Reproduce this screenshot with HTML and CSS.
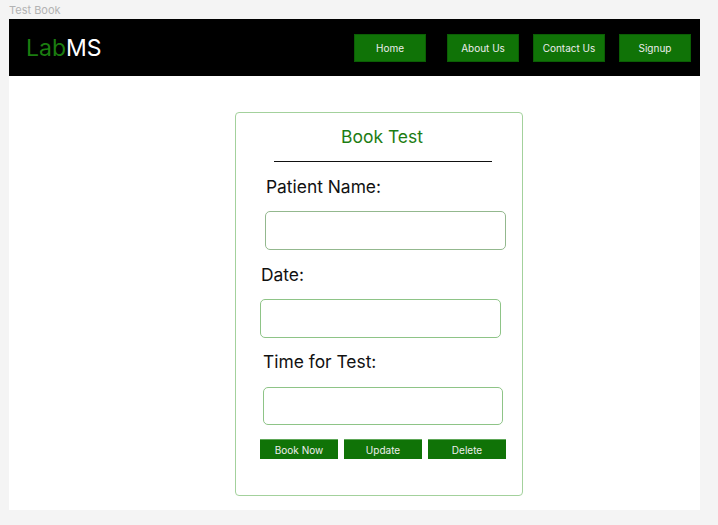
FILE: index.html
```html
<!DOCTYPE html>
<html lang="en">
<head>
<meta charset="utf-8">
<title>Test Book</title>
<link rel="stylesheet" href="styles.css">
</head>
<body>
  <div class="frame-label">Test Book</div>
  <div class="frame">
    <header class="topbar">
      <div class="logo"><span class="logo-lab">Lab</span><span class="logo-ms">MS</span></div>
      <nav class="nav">
        <a class="nav-btn">Home</a>
        <a class="nav-btn nav-btn-wide">About Us</a>
        <a class="nav-btn">Contact Us</a>
        <a class="nav-btn">Signup</a>
      </nav>
    </header>
    <main class="card">
      <h1 class="card-title">Book Test</h1>
      <div class="divider"></div>
      <label class="field-label label-name">Patient Name:</label>
      <input class="field field-name" type="text">
      <label class="field-label label-date">Date:</label>
      <input class="field field-date" type="text">
      <label class="field-label label-time">Time for Test:</label>
      <input class="field field-time" type="text">
      <div class="actions">
        <button class="action-btn">Book Now</button>
        <button class="action-btn">Update</button>
        <button class="action-btn">Delete</button>
      </div>
    </main>
  </div>
</body>
</html>
```

FILE: styles.css
```css
* { box-sizing: border-box; }

body {
  margin: 0;
  background: #f4f4f4;
  font-family: Inter, "Noto Sans", sans-serif;
  width: 718px;
  height: 525px;
  overflow: hidden;
}

.frame-label {
  margin: 4px 0 0 9px;
  font-size: 11px;
  line-height: 13px;
  color: #b3b3b3;
}

.frame {
  margin: 2px 0 0 9px;
  width: 691px;
  height: 491px;
  background: #ffffff;
  overflow: hidden;
}

.topbar {
  height: 57px;
  background: #000000;
  display: flex;
  align-items: center;
  padding: 0 9px 0 17px;
}

.logo {
  font-size: 23px;
  line-height: 28px;
  letter-spacing: 0;
}

.logo-lab { color: #1b7d10; }
.logo-ms { color: #ffffff; }

.nav {
  margin-left: auto;
  display: flex;
  gap: 14px;
}

.nav-btn {
  width: 72px;
  height: 28px;
  background: #107307;
  border: 1px solid #0b5e04;
  color: #ececec;
  font-size: 10px;
  display: flex;
  align-items: center;
  justify-content: center;
}

.nav-btn-wide { margin-left: 7px; }

.card {
  margin: 36px 0 0 226px;
  width: 288px;
  height: 384px;
  border: 1px solid #a3d19c;
  border-radius: 4px;
  padding-top: 14px;
}

.card-title {
  margin: 0;
  padding-left: 6px;
  font-weight: 400;
  font-size: 17.5px;
  line-height: 20px;
  color: #1d7d13;
  text-align: center;
}

.divider {
  margin: 14px 0 0 38px;
  width: 218px;
  height: 1px;
  background: #111111;
}

.field-label {
  display: block;
  font-size: 17.4px;
  line-height: 20px;
  color: #111111;
}

.label-name { margin: 15px 0 0 30px; }
.label-date { margin: 15px 0 0 25px; }
.label-time { margin: 14px 0 0 27px; }

.field {
  display: block;
  width: 241px;
  height: 39px;
  border: 1px solid #8ec487;
  border-radius: 5px;
  background: #ffffff;
  padding: 0;
  outline: none;
}

.field-name { margin: 14px 0 0 29px; border-color: #93b88e; }
.field-date { margin: 14px 0 0 24px; }
.field-time { margin: 15px 0 0 27px; width: 240px; height: 38px; }

.actions {
  margin: 14px 0 0 24px;
  display: flex;
  gap: 6px;
}

.action-btn {
  width: 78px;
  height: 20px;
  padding: 0;
  background: #107307;
  border: none;
  border-top: 1px solid #5fa758;
  color: #eeeeee;
  font-family: Inter, "Noto Sans", sans-serif;
  font-size: 10px;
  line-height: 18px;
}
```
